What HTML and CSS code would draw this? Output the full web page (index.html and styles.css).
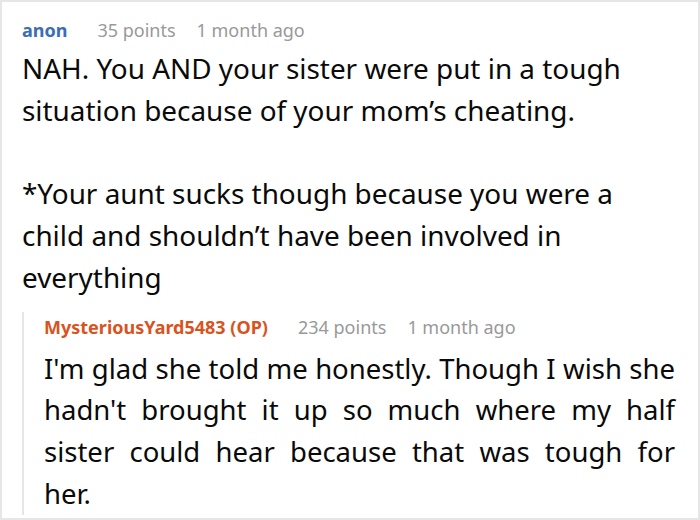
FILE: index.html
```html
<!DOCTYPE html>
<html>
<head>
<meta charset="utf-8">
<link rel="stylesheet" href="styles.css">
</head>
<body>
<div class="frame">
  <div class="comment">
    <div class="meta">
      <span class="author">anon</span>
      <span class="points">35 points</span>
      <span class="time">1 month ago</span>
    </div>
    <div class="body">
      <p>NAH. You AND your sister were put in a tough situation because of your mom’s cheating.</p>
      <p>*Your aunt sucks though because you were a child and shouldn’t have been involved in everything</p>
    </div>
    <div class="reply">
      <div class="meta">
        <span class="author op">MysteriousYard5483 (OP)</span>
        <span class="points">234 points</span>
        <span class="time">1 month ago</span>
      </div>
      <div class="body reply-body">
        <p>I'm glad she told me honestly. Though I wish she hadn't brought it up so much where my half sister could hear because that was tough for<br>her.</p>
      </div>
    </div>
  </div>
</div>
</body>
</html>
```

FILE: styles.css
```css
html, body {
  margin: 0;
  padding: 0;
  background: #ffffff;
}
.frame {
  width: 700px;
  height: 520px;
  box-sizing: border-box;
  border: 2px solid #e6e6e6;
  overflow: hidden;
  font-family: "Noto Sans", sans-serif;
}
.comment {
  padding: 10px 20px 0 20px;
}
.meta {
  font-size: 18px;
  line-height: 36px;
  display: flex;
  gap: 21px;
}
.author {
  color: #3b6eb6;
  font-weight: 700;
  margin-right: 9px;
}
.author.op {
  color: #d9531e;
}
.points, .time {
  color: #999999;
}
.body {
  font-size: 27.9px;
  line-height: 41.75px;
  color: #0a0a0a;
}
.body p {
  margin: 0 0 41.75px 0;
}
.body p:last-child {
  margin-bottom: 0;
}
.reply {
  margin-top: 13px;
  border-left: 2px solid #e6e6e6;
  padding-left: 20px;
  padding-right: 3px;
}
.reply .meta {
  line-height: 30px;
  margin-bottom: 6px;
}
.reply-body {
  font-size: 27.5px;
  text-align: justify;
  text-align-last: justify;
  margin-bottom: -11px;
}
```
